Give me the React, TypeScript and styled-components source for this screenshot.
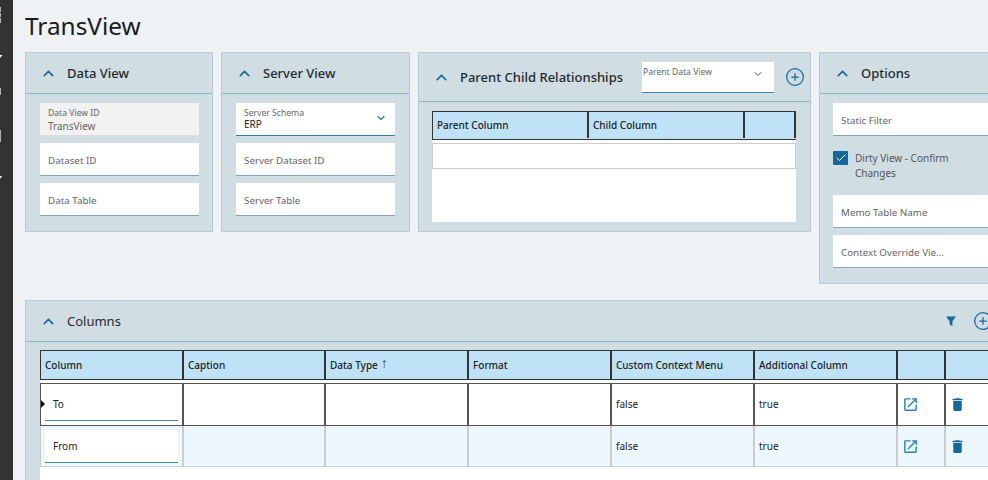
import styled, {createGlobalStyle} from "styled-components";
import {Check, ChevronDown, ChevronUp, CirclePlus} from "lucide-react";
import {MdDelete, MdOpenInNew} from "react-icons/md";

const ACCENT = "#14699b";

const GlobalStyle = createGlobalStyle`
    html, body {
        margin: 0;
        height: 100%;
        overflow: hidden;
        background: #eef2f5;
        font-family: "Noto Sans", "Open Sans", sans-serif;
    }
    * {
        box-sizing: border-box;
    }
`;

const columnRows = [
    {name: "To", active: true},
    {name: "From", active: false},
];

const Field = ({label}: {label: string}) => (
    <StyledField>
        <FieldText>{label}</FieldText>
    </StyledField>
);

const App = () => {
    return (
        <Page>
            <GlobalStyle />
            <Sidebar>
                <svg width="13" height="190" viewBox="0 0 13 190">
                    <g fill="#b5b5b5">
                        <rect x="0" y="7" width="1" height="5" />
                        <rect x="0" y="13" width="1" height="4" />
                        <rect x="0" y="18" width="1" height="5" />
                        <rect x="0" y="88" width="1" height="7" />
                        <rect x="0" y="130" width="1" height="12" />
                    </g>
                    <g fill="#ffffff">
                        <path d="M0 55h2.5L0 58z" />
                        <path d="M0 176h2L0 179z" />
                    </g>
                </svg>
            </Sidebar>
            <Main>
                <Title>TransView</Title>
                <TopRow>
                    <Panel $width={188}>
                        <PanelHeader>
                            <Chevron size={17} strokeWidth={2.2} />
                            <PanelTitle>Data View</PanelTitle>
                        </PanelHeader>
                        <FieldStack>
                            <ReadOnlyField>
                                <SmallLabel>Data View ID</SmallLabel>
                                <ReadOnlyValue>TransView</ReadOnlyValue>
                            </ReadOnlyField>
                            <Field label="Dataset ID" />
                            <Field label="Data Table" />
                        </FieldStack>
                    </Panel>
                    <Panel $width={189}>
                        <PanelHeader>
                            <Chevron size={17} strokeWidth={2.2} />
                            <PanelTitle>Server View</PanelTitle>
                        </PanelHeader>
                        <FieldStack>
                            <SelectField>
                                <div>
                                    <SmallLabel>Server Schema</SmallLabel>
                                    <SelectValue>ERP</SelectValue>
                                </div>
                                <ChevronDown size={12} color="#2b7fae" strokeWidth={2.4} />
                            </SelectField>
                            <Field label="Server Dataset ID" />
                            <Field label="Server Table" />
                        </FieldStack>
                    </Panel>
                    <Panel $width={393}>
                        <RelationHeader>
                            <Chevron size={17} strokeWidth={2.2} />
                            <RelationTitle>Parent Child Relationships</RelationTitle>
                            <ParentSelect>
                                <SmallLabel>Parent Data View</SmallLabel>
                                <ChevronDown size={12} color="#555" strokeWidth={2} />
                            </ParentSelect>
                            <CirclePlus size={20} color={ACCENT} strokeWidth={1.5} />
                        </RelationHeader>
                        <RelationBody>
                            <RelationGrid>
                                <RelationHeadRow>
                                    <HeadCell>Parent Column</HeadCell>
                                    <HeadCell>Child Column</HeadCell>
                                    <HeadCell />
                                </RelationHeadRow>
                                <EmptyRow />
                            </RelationGrid>
                        </RelationBody>
                    </Panel>
                    <OptionsPanel>
                        <PanelHeader>
                            <Chevron size={17} strokeWidth={2.2} />
                            <PanelTitle>Options</PanelTitle>
                        </PanelHeader>
                        <OptionsBody>
                            <Field label="Static Filter" />
                            <CheckRow>
                                <CheckBox>
                                    <Check size={12} color="#fff" strokeWidth={2} />
                                </CheckBox>
                                <CheckText>Dirty View - Confirm Changes</CheckText>
                            </CheckRow>
                            <MemoStack>
                                <Field label="Memo Table Name" />
                                <Field label="Context Override Vie..." />
                            </MemoStack>
                        </OptionsBody>
                    </OptionsPanel>
                </TopRow>
                <ColumnsPanel>
                    <ColumnsHeader>
                        <Chevron size={17} strokeWidth={2.2} />
                        <ColumnsTitle>Columns</ColumnsTitle>
                        <HeaderTools>
                            <svg width="12" height="12" viewBox="0 0 12 12">
                                <path d="M1 1.5h10L7.4 6.2V11L4.6 9.6V6.2z" fill={ACCENT} />
                            </svg>
                            <CirclePlus size={20} color={ACCENT} strokeWidth={1.5} />
                        </HeaderTools>
                    </ColumnsHeader>
                    <ColumnsBody>
                        <ColumnsHeadRow>
                            <HeadCell>Column</HeadCell>
                            <HeadCell>Caption</HeadCell>
                            <HeadCell>Data Type<SortArrow>↑</SortArrow></HeadCell>
                            <HeadCell>Format</HeadCell>
                            <HeadCell>Custom Context Menu</HeadCell>
                            <HeadCell>Additional Column</HeadCell>
                            <HeadCell />
                            <HeadCell />
                        </ColumnsHeadRow>
                        {columnRows.map((row) => (
                            <ColumnsRow key={row.name} $active={row.active}>
                                <BodyCell $active={row.active}>
                                    {row.active && <RowMarker />}
                                    <CellInput>{row.name}</CellInput>
                                </BodyCell>
                                <BodyCell $active={row.active} />
                                <BodyCell $active={row.active} />
                                <BodyCell $active={row.active} />
                                <BodyCell $active={row.active}>false</BodyCell>
                                <BodyCell $active={row.active}>true</BodyCell>
                                <BodyCell $active={row.active}>
                                    <OpenIcon size={17} />
                                </BodyCell>
                                <BodyCell $active={row.active}>
                                    <DeleteIcon size={17} />
                                </BodyCell>
                            </ColumnsRow>
                        ))}
                    </ColumnsBody>
                </ColumnsPanel>
            </Main>
        </Page>
    );
};

export default App;

const Page = styled.div`
    width: 988px;
    height: 480px;
    display: flex;
    overflow: hidden;
    background: #eef2f5;
`;

const Sidebar = styled.div`
    width: 13px;
    flex: none;
    background: #333333;
`;

const Main = styled.div`
    flex: 1;
    min-width: 0;
    padding: 0 0 0 12px;
    overflow: hidden;
`;

const Title = styled.h1`
    margin: 0;
    height: 52px;
    padding-top: 8px;
    font-size: 24.4px;
    line-height: 36px;
    font-weight: 400;
    color: #1c1c1c;
`;

const TopRow = styled.div`
    display: flex;
    align-items: flex-start;
    gap: 8px;
    width: 1000px;
`;

const Panel = styled.section<{$width: number}>`
    width: ${(p) => p.$width}px;
    height: 180px;
    flex: none;
    background: #d0dde2;
    border: 1px solid #b9cbd1;
`;

const OptionsPanel = styled.section`
    width: 200px;
    height: 232px;
    flex: none;
    background: #d0dde2;
    border: 1px solid #b9cbd1;
`;

const PanelHeader = styled.header`
    height: 41px;
    display: flex;
    align-items: center;
    gap: 10px;
    padding-left: 14px;
    border-bottom: 1px solid #8fb6c6;
`;

const Chevron = styled(ChevronUp)`
    flex: none;
    color: ${ACCENT};
`;

const PanelTitle = styled.h2`
    margin: 0;
    font-size: 13px;
    font-weight: 500;
    color: #1f2a30;
`;

const FieldStack = styled.div`
    width: 187px;
    display: flex;
    flex-direction: column;
    gap: 7px;
    padding: 9px 14px 0;
`;

const StyledField = styled.div`
    height: 33px;
    display: flex;
    align-items: center;
    padding: 2px 8px 0;
    background: #fff;
    border-bottom: 1px solid #7ea9bd;
    min-width: 0;
`;

const FieldText = styled.span`
    font-size: 9.8px;
    color: #666;
    white-space: nowrap;
`;

const ReadOnlyField = styled.div`
    height: 33px;
    padding: 4px 8px 0;
    background: #f2f2f2;
    border-bottom: 1px solid #dcdcdc;
`;

const SmallLabel = styled.div`
    font-size: 8.6px;
    line-height: 12px;
    color: #666;
`;

const ReadOnlyValue = styled.div`
    font-size: 10px;
    line-height: 15px;
    color: #666;
`;

const SelectField = styled.div`
    height: 33px;
    display: flex;
    align-items: center;
    justify-content: space-between;
    padding: 0 8px 2px;
    background: #fff;
    border-bottom: 1px solid #2b7fae;
`;

const SelectValue = styled.div`
    font-size: 10px;
    line-height: 11px;
    color: #222;
`;

const RelationHeader = styled.header`
    height: 49px;
    display: flex;
    align-items: center;
    padding-left: 14px;
    border-bottom: 1px solid #8fb6c6;
`;

const RelationTitle = styled.h2`
    margin: 0 0 0 10px;
    width: 182px;
    font-size: 13px;
    font-weight: 500;
    color: #1f2a30;
    white-space: nowrap;
`;

const ParentSelect = styled.div`
    width: 132px;
    height: 31px;
    display: flex;
    align-items: flex-start;
    justify-content: space-between;
    margin: 1px 11px 0 0;
    padding: 4px 10px 0 1px;
    background: #fff;
    border-bottom: 1px solid #3f84aa;
    & > svg {
        margin-top: 2px;
    }
`;

const RelationBody = styled.div`
    padding: 9px 14px 0 13px;
`;

const RelationGrid = styled.div`
    height: 111px;
    background: #fff;
`;

const HeadRowBase = styled.div`
    display: grid;
    height: 29px;
    background: #bfe2f6;
    border-top: 1px solid #333;
    border-bottom: 1px solid #333;
    border-left: 1px solid #333;
`;

const RelationHeadRow = styled(HeadRowBase)`
    grid-template-columns: 156px 156px 51px;
    padding-bottom: 1px;
`;

const HeadCell = styled.div`
    display: flex;
    align-items: center;
    gap: 3px;
    padding-left: 4px;
    font-size: 10px;
    font-weight: 500;
    color: #222;
    border-right: 2px solid #333;
    white-space: nowrap;
`;

const EmptyRow = styled.div`
    height: 26px;
    margin-top: 3px;
    border: 1px solid #ccc;
`;

const ColumnsPanel = styled.section`
    width: 1000px;
    height: 200px;
    margin-top: 16px;
    background: #d0dde2;
    border: 1px solid #b9cbd1;
`;

const ColumnsHeader = styled.header`
    height: 41px;
    display: flex;
    align-items: center;
    padding: 0 31px 0 14px;
    border-bottom: 1px solid #8fb6c6;
`;

const ColumnsTitle = styled(PanelTitle)`
    margin-left: 10px;
    font-weight: 400;
`;

const HeaderTools = styled.div`
    margin-left: auto;
    display: flex;
    align-items: center;
    gap: 16px;
`;

const ColumnsBody = styled.div`
    margin: 8px 0 0 14px;
    height: 140px;
    background: #fff;
`;

const ColumnsHeadRow = styled(HeadRowBase)`
    height: 30px;
    grid-template-columns: 143px 142px 143px 143px 143px 143px 48px 48px;
`;

const ColumnsRow = styled.div<{$active: boolean}>`
    display: grid;
    grid-template-columns: 143px 142px 143px 143px 143px 143px 48px 48px;
    height: ${(p) => (p.$active ? "43px" : "41px")};
    margin-top: ${(p) => (p.$active ? "3px" : "0")};
    background: ${(p) => (p.$active ? "#fff" : "#ecf7fe")};
    border-top: ${(p) => (p.$active ? "1px solid #555" : "0")};
    border-bottom: 1px solid ${(p) => (p.$active ? "#555" : "#ccc")};
    border-left: 1px solid ${(p) => (p.$active ? "#555" : "#ccc")};
`;

const BodyCell = styled.div<{$active: boolean}>`
    position: relative;
    display: flex;
    align-items: center;
    padding-left: 4px;
    padding-bottom: ${(p) => (p.$active ? "1px" : "0")};
    font-size: 10px;
    color: #222;
    border-right: 2px solid ${(p) => (p.$active ? "#555" : "#ccc")};
`;

const CellInput = styled.div`
    width: 133px;
    height: 33px;
    display: flex;
    align-items: center;
    padding-left: 8px;
    background: #fff;
    border-bottom: 1px solid #3f84aa;
    font-size: 10px;
`;

const OpenIcon = styled(MdOpenInNew)`
    color: #2a83b8;
`;

const DeleteIcon = styled(MdDelete)`
    margin-left: -1px;
    color: ${ACCENT};
`;

const RowMarker = styled.span`
    position: absolute;
    left: 0;
    top: 16px;
    width: 0;
    height: 0;
    border-style: solid;
    border-width: 4px 0 4px 4px;
    border-color: transparent transparent transparent #111;
`;

const SortArrow = styled.span`
    font-size: 14px;
    line-height: 10px;
    margin-top: -4px;
    color: #444;
`;

const OptionsBody = styled.div`
    padding: 9px 0 0 13px;
`;

const CheckRow = styled.div`
    display: flex;
    align-items: flex-start;
    gap: 7px;
    height: 59px;
    padding-top: 15px;
`;

const CheckBox = styled.span`
    width: 15px;
    height: 14px;
    flex: none;
    display: flex;
    align-items: center;
    justify-content: center;
    background: ${ACCENT};
    border-radius: 1px;
`;

const CheckText = styled.span`
    width: 110px;
    font-size: 10px;
    line-height: 15px;
    color: #555;
`;

const MemoStack = styled.div`
    display: flex;
    flex-direction: column;
    gap: 7px;
`;
